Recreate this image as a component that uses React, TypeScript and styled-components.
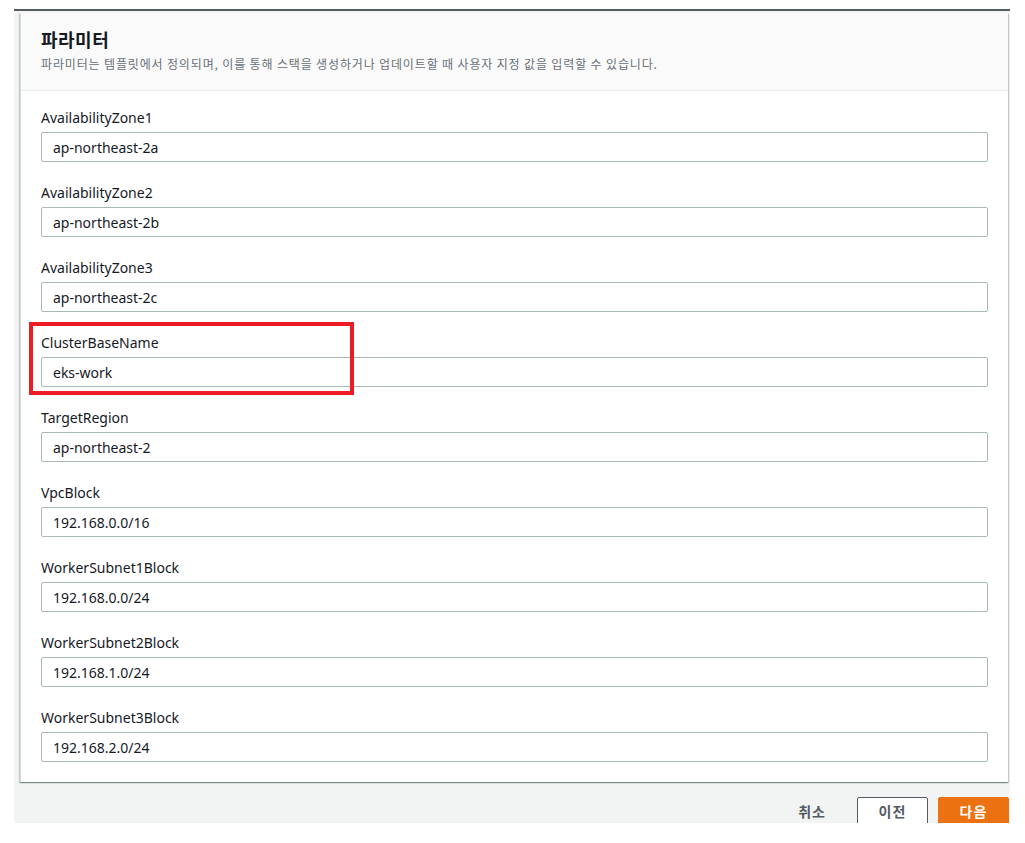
import React from "react";
import styled, { createGlobalStyle } from "styled-components";

const GlobalStyle = createGlobalStyle`
  html, body {
    margin: 0;
    padding: 0;
    background: #fff;
    font-family: "Noto Sans", "Noto Sans CJK KR", sans-serif;
    color: #16191f;
  }
`;

const Page = styled.div`
  padding-top: 9px;
`;

const Frame = styled.div`
  margin-left: 14px;
  width: 996px;
  border-top: 2px solid #545b64;
  background: #f2f3f3;
  padding: 2px 2px 0 6px;
  box-sizing: border-box;
`;

const Card = styled.div`
  background: #fff;
  box-shadow: 0 1px 1px 0 rgba(0, 28, 36, 0.3), 1px 1px 1px 0 rgba(0, 28, 36, 0.15),
    -1px 1px 1px 0 rgba(0, 28, 36, 0.15);
  border-left: 1px solid #d5dbdb;
`;

const Header = styled.div`
  background: #fafafa;
  border-bottom: 1px solid #eaeded;
  padding: 13px 20px 0;
  height: 78px;
  box-sizing: border-box;
`;

const Title = styled.h2`
  margin: 0;
  font-size: 18px;
  font-weight: 700;
  line-height: 26px;
  letter-spacing: 0.5px;
  color: #16191f;
  font-family: "Noto Sans CJK KR", sans-serif;
`;

const Description = styled.div`
  margin-top: 3px;
  font-size: 12px;
  line-height: 18px;
  letter-spacing: 0.85px;
  color: #687078;
  font-family: "Noto Sans CJK KR", sans-serif;
`;

const Body = styled.div`
  padding: 16px 20px 20px;
  display: flex;
  flex-direction: column;
  gap: 20px;
`;

const Field = styled.div`
  display: flex;
  flex-direction: column;
  position: relative;
`;

const Highlight = styled.div`
  position: absolute;
  left: -12px;
  top: -10px;
  width: 325px;
  height: 73px;
  border: 4px solid #ed1c24;
  box-sizing: border-box;
  pointer-events: none;
`;

const Label = styled.label`
  font-size: 14px;
  line-height: 22px;
  color: #16191f;
  margin-bottom: 3px;
`;

const Input = styled.input`
  height: 30px;
  box-sizing: border-box;
  border: 1px solid #aab7b8;
  border-radius: 2px;
  padding: 0 11px;
  font-family: inherit;
  font-size: 14px;
  color: #16191f;
  background: #fff;
  outline: none;
`;

const Footer = styled.div`
  height: 41px;
  overflow: hidden;
  display: flex;
  justify-content: flex-end;
  align-items: flex-start;
  padding-top: 15px;
  margin-right: -1px;
  box-sizing: border-box;
  gap: 10px;
`;

const Button = styled.button<{ $variant: "link" | "normal" | "primary" }>`
  height: 32px;
  box-sizing: border-box;
  padding: ${(p) => (p.$variant === "link" ? "0 20px 0 0" : "0")};
  border-radius: 2px;
  font-family: "Noto Sans CJK KR", sans-serif;
  font-size: 14px;
  font-weight: 700;
  letter-spacing: 1px;
  cursor: pointer;
  line-height: 24px;
  padding-bottom: 4px;
  border: 1px solid
    ${(p) => (p.$variant === "normal" ? "#545b64" : p.$variant === "primary" ? "#ec7211" : "transparent")};
  background: ${(p) => (p.$variant === "normal" ? "#fff" : p.$variant === "primary" ? "#ec7211" : "transparent")};
  color: ${(p) => (p.$variant === "primary" ? "#fff" : "#545b64")};
  width: ${(p) => (p.$variant === "link" ? "auto" : "71px")};
`;

const params = [
  { name: "AvailabilityZone1", value: "ap-northeast-2a" },
  { name: "AvailabilityZone2", value: "ap-northeast-2b" },
  { name: "AvailabilityZone3", value: "ap-northeast-2c" },
  { name: "ClusterBaseName", value: "eks-work", highlight: true },
  { name: "TargetRegion", value: "ap-northeast-2" },
  { name: "VpcBlock", value: "192.168.0.0/16" },
  { name: "WorkerSubnet1Block", value: "192.168.0.0/24" },
  { name: "WorkerSubnet2Block", value: "192.168.1.0/24" },
  { name: "WorkerSubnet3Block", value: "192.168.2.0/24" },
];

const App = () => {
  return (
    <Page>
      <GlobalStyle />
      <Frame>
        <Card>
          <Header>
            <Title>파라미터</Title>
            <Description>
              파라미터는 템플릿에서 정의되며, 이를 통해 스택을 생성하거나 업데이트할 때 사용자 지정 값을 입력할 수 있습니다.
            </Description>
          </Header>
          <Body>
            {params.map((p) => (
              <Field key={p.name}>
                {p.highlight && <Highlight />}
                <Label>{p.name}</Label>
                <Input defaultValue={p.value} />
              </Field>
            ))}
          </Body>
        </Card>
        <Footer>
          <Button $variant="link">취소</Button>
          <Button $variant="normal">이전</Button>
          <Button $variant="primary">다음</Button>
        </Footer>
      </Frame>
    </Page>
  );
};

export default App;
